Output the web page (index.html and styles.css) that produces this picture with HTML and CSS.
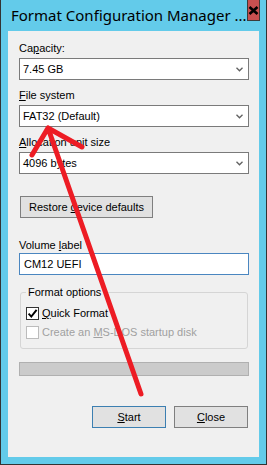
FILE: index.html
```html
<!DOCTYPE html>
<html lang="en">
<head>
    <meta charset="UTF-8">
    <meta name="viewport" content="width=device-width, initial-scale=1.0">
    <title>Format Configuration Manager</title>
    <link rel="stylesheet" href="styles.css">
</head>
<body>
    <div class="window">
        <div class="titlebar">
            <span class="title">Format Configuration Manager ...</span>
            <button class="close-btn" aria-label="Close">
                <svg width="11" height="9" viewBox="0 0 11 9">
                    <path d="M1.5 1 L9.5 8 M9.5 1 L1.5 8" stroke="#000" stroke-width="2.6" fill="none"/>
                </svg>
            </button>
        </div>

        <div class="client">
            <div class="field">
                <label class="field-label">Ca<u>p</u>acity:</label>
                <div class="combo">
                    <span>7.45 GB</span>
                    <svg class="chevron" width="7" height="5" viewBox="0 0 7 5"><polyline points="0.5 0.8 3.5 3.8 6.5 0.8" fill="none" stroke="#606060" stroke-width="1.3"/></svg>
                </div>
            </div>
            <div class="field">
                <label class="field-label"><u>F</u>ile system</label>
                <div class="combo">
                    <span>FAT32 (Default)</span>
                    <svg class="chevron" width="7" height="5" viewBox="0 0 7 5"><polyline points="0.5 0.8 3.5 3.8 6.5 0.8" fill="none" stroke="#606060" stroke-width="1.3"/></svg>
                </div>
            </div>
            <div class="field">
                <label class="field-label"><u>A</u>llocation unit size</label>
                <div class="combo">
                    <span>4096 bytes</span>
                    <svg class="chevron" width="7" height="5" viewBox="0 0 7 5"><polyline points="0.5 0.8 3.5 3.8 6.5 0.8" fill="none" stroke="#606060" stroke-width="1.3"/></svg>
                </div>
            </div>

            <button class="btn btn-restore">Restore <u>d</u>evice defaults</button>

            <div class="field field-volume">
                <label class="field-label">Volume <u>l</u>abel</label>
                <div class="textbox">CM12 UEFI</div>
            </div>

            <fieldset class="group">
                <legend>Format options</legend>
                <div class="check-row">
                    <span class="checkbox">
                        <svg width="11" height="11" viewBox="0 0 11 11"><path d="M1.6 5.6 L4.3 8.6 L9.6 1.8" fill="none" stroke="#000" stroke-width="1.9"/></svg>
                    </span>
                    <span><u>Q</u>uick Format</span>
                </div>
                <div class="check-row disabled">
                    <span class="checkbox"></span>
                    <span>Create an <u>M</u>S-DOS startup disk</span>
                </div>
            </fieldset>

            <div class="progress"></div>

            <div class="actions">
                <button class="btn btn-default"><u>S</u>tart</button>
                <button class="btn"><u>C</u>lose</button>
            </div>
        </div>

        <!-- red arrow drawn over the dialog -->
        <svg class="annotation" width="267" height="465" viewBox="0 0 267 465">
            <path d="M141 394 L48 128 M48 128 L32 155 M48 128 L82 147" fill="none" stroke="#ed1c24" stroke-width="5" stroke-linecap="round" stroke-linejoin="round"/>
        </svg>
    </div>
</body>
</html>
```

FILE: styles.css
```css
:root {
    --frame-color: #63cbea;
    --client-bg: #f0f0f0;
    --text-color: #000;
    --control-border: #7a7a7a;
    --button-bg: #e1e1e1;
    --accent-border: #3c7fb1;
}

* {
    margin: 0;
    padding: 0;
    box-sizing: border-box;
}

body {
    font-family: 'Liberation Sans', Arial, sans-serif;
    font-size: 11px;
    color: var(--text-color);
    background: #fff;
}

.window {
    position: relative;
    width: 267px;
    height: 465px;
    background-color: var(--frame-color);
    border: 1px solid #333;
    border-top: none;
    display: flex;
    flex-direction: column;
}

.titlebar {
    height: 31px;
    display: flex;
    justify-content: space-between;
    align-items: flex-start;
}

.title {
    font-family: 'Noto Sans', sans-serif;
    font-size: 15px;
    line-height: 20px;
    padding: 5px 0 0 10px;
    white-space: nowrap;
}

.close-btn {
    width: 33px;
    height: 21px;
    margin-right: 6px;
    background-color: #c75050;
    border: 1px solid #3b3b3b;
    border-top: none;
    display: flex;
    align-items: center;
    justify-content: center;
}

.client {
    flex: 1;
    margin: 0 7px 7px 7px;
    background-color: var(--client-bg);
    padding: 11px 10px 0 11px;
    display: flex;
    flex-direction: column;
}

.field {
    display: flex;
    flex-direction: column;
    margin-bottom: 9px;
}

.field-label {
    line-height: 13px;
    height: 13px;
    margin-bottom: 3px;
}

.combo {
    height: 22px;
    background-color: #fff;
    border: 1px solid var(--control-border);
    display: flex;
    align-items: center;
    justify-content: space-between;
    padding: 0 5px 0 3px;
}

.btn {
    font-family: inherit;
    font-size: 11px;
    color: var(--text-color);
    height: 22px;
    background-color: var(--button-bg);
    border: 1px solid #7f7f7f;
}

.btn-restore {
    width: 133px;
    margin: 13px 0 0 1px;
}

.field-volume {
    margin-top: 21px;
    margin-bottom: 0;
}

.field-volume .field-label {
    margin-bottom: 1px;
}

.textbox {
    height: 22px;
    background-color: #fff;
    border: 1px solid #4a86c0;
    display: flex;
    align-items: center;
    padding-left: 4px;
}

.group {
    margin: 11px 1px 0 1px;
    border: 1px solid #d5d5d5;
    border-radius: 3px;
    padding: 8px 5px 9px 5px;
    display: flex;
    flex-direction: column;
    gap: 6px;
}

.group legend {
    line-height: 13px;
    padding: 0 2px;
}

.check-row {
    display: flex;
    align-items: center;
    gap: 3px;
    line-height: 13px;
}

.checkbox {
    width: 13px;
    height: 13px;
    border: 1px solid #333;
    background-color: #fff;
    display: flex;
    align-items: center;
    justify-content: center;
}

.check-row.disabled {
    color: #a0a0a0;
}

.check-row.disabled .checkbox {
    border-color: #bcbcbc;
}

.progress {
    height: 14px;
    margin-top: 13px;
    background-color: #cbcbcb;
    border: 1px solid #b0b0b0;
}

.actions {
    display: flex;
    justify-content: flex-end;
    gap: 8px;
    margin-top: 30px;
    padding-right: 1px;
}

.actions .btn {
    width: 74px;
}

.btn-default {
    border-color: var(--accent-border);
}

.annotation {
    position: absolute;
    top: 0;
    left: -1px;
    pointer-events: none;
}
```
